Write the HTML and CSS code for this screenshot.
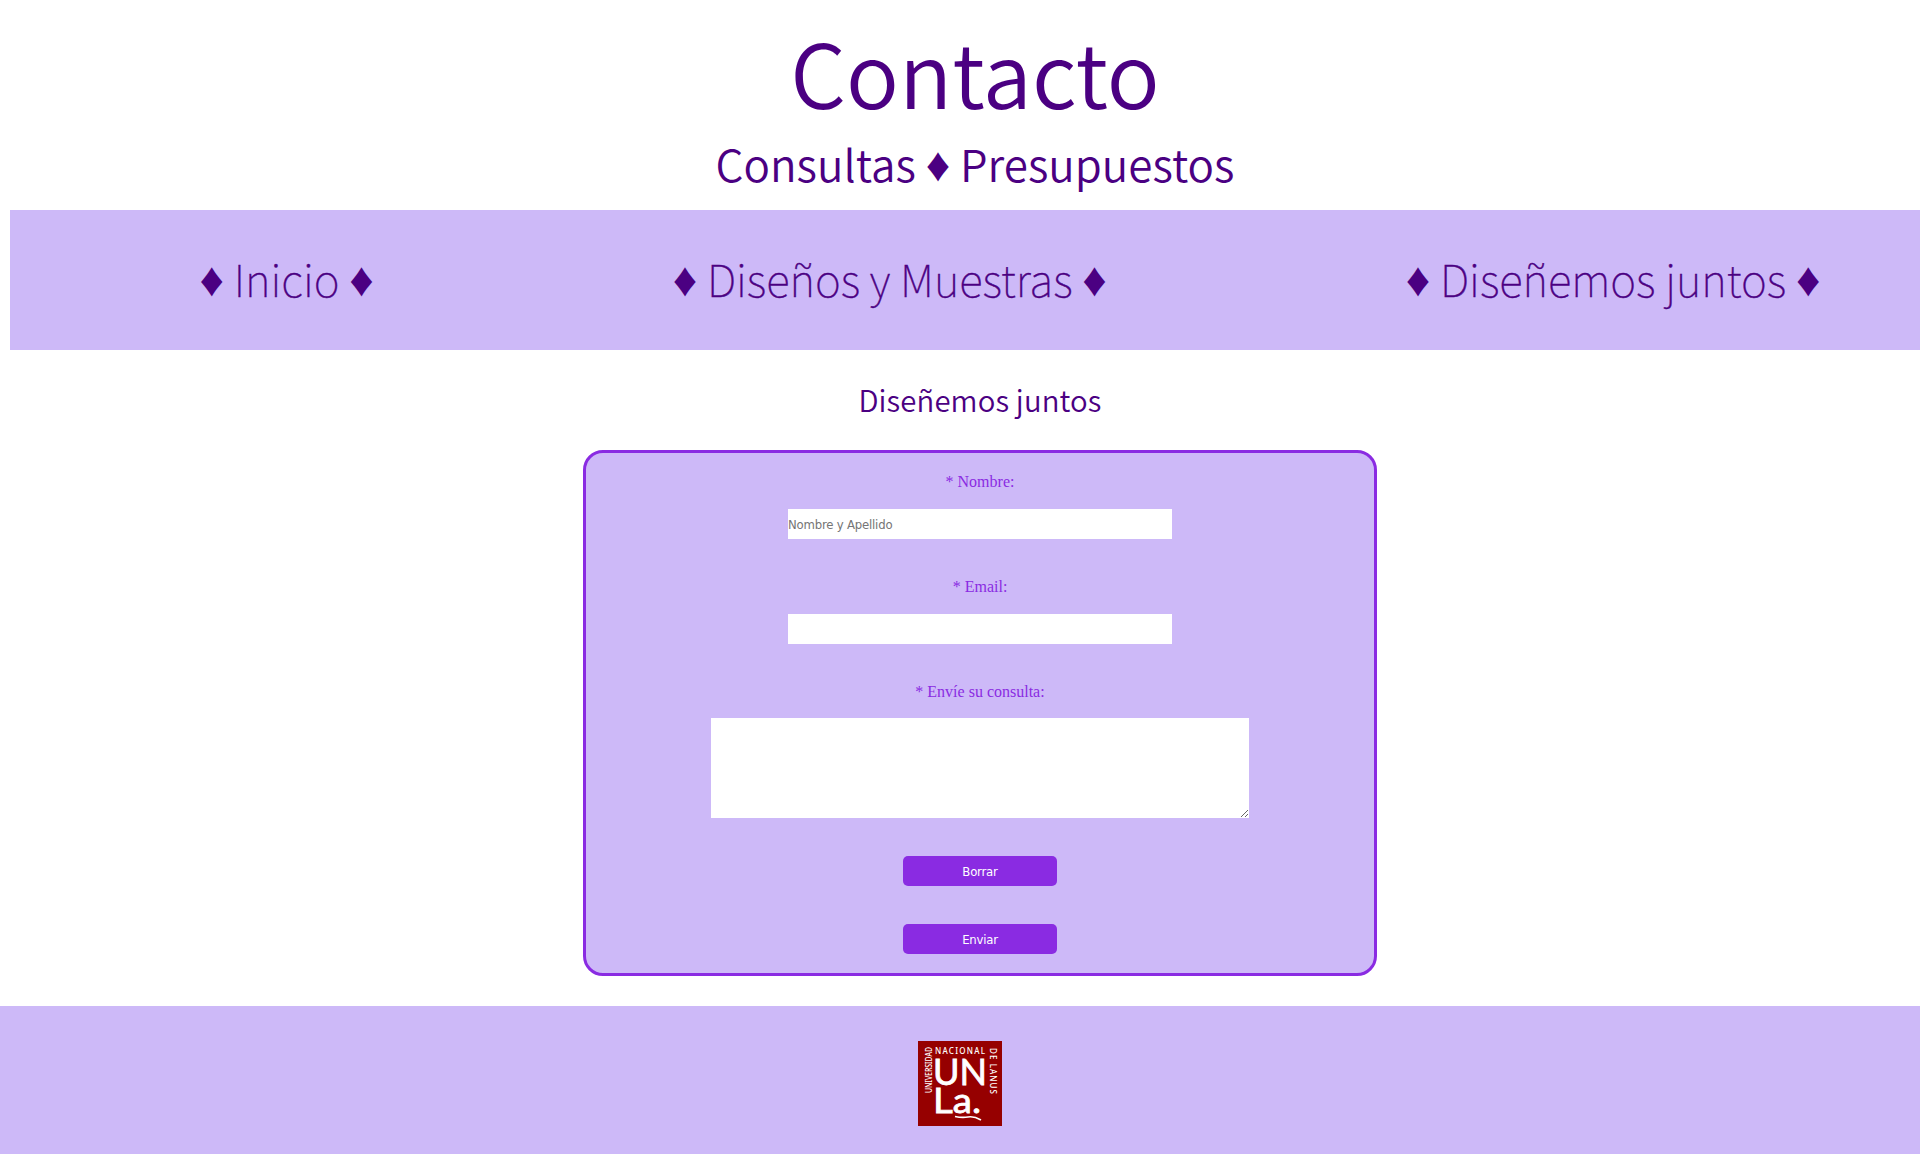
FILE: index.html
```html
<!DOCTYPE html>
<html lang="es">
<head>
<meta charset="utf-8">
<title>Contacto</title>
<link rel="stylesheet" href="styles.css">
</head>
<body>
<header class="header">
  <h1 class="title">Contacto</h1>
  <h2 class="subtitle">Consultas <span class="diamond">♦</span> Presupuestos</h2>
</header>
<nav class="nav">
  <a class="nav-link"><span class="diamond">♦</span> Inicio <span class="diamond">♦</span></a>
  <a class="nav-link"><span class="diamond">♦</span> Diseños y Muestras <span class="diamond">♦</span></a>
  <a class="nav-link"><span class="diamond">♦</span> Diseñemos juntos <span class="diamond">♦</span></a>
</nav>
<main class="main">
  <h3 class="section-title">Diseñemos juntos</h3>
  <form class="form">
    <label class="label" for="nombre">* Nombre:</label>
    <input class="input" id="nombre" type="text" placeholder="Nombre y Apellido">
    <label class="label" for="email">* Email:</label>
    <input class="input" id="email" type="email">
    <label class="label label-message" for="consulta">* Envíe su consulta:</label>
    <textarea class="textarea" id="consulta"></textarea>
    <button class="button" type="reset">Borrar</button>
    <button class="button" type="submit">Enviar</button>
  </form>
</main>
<footer class="footer">
  <svg class="logo" viewBox="0 0 84 85" role="img" aria-label="Universidad Nacional de Lanús">
    <rect width="84" height="85" fill="#960000"/>
    <g fill="#fff">
      <text class="logo-small" x="17" y="13" textLength="50">NACIONAL</text>
      <text class="logo-small" transform="translate(13.5 52) rotate(-90)" textLength="46" lengthAdjust="spacingAndGlyphs">UNIVERSIDAD</text>
      <text class="logo-small" transform="translate(71.5 7) rotate(90)" textLength="46">DE LANUS</text>
      <text class="logo-big" x="15" y="43.500" textLength="54" lengthAdjust="spacingAndGlyphs">UN</text>
      <text class="logo-big logo-la" x="15" y="72" textLength="48" lengthAdjust="spacingAndGlyphs">La.</text>
    </g>
    <path d="M37 75.500Q44 77 50 76T63 79" fill="none" stroke="#fff" stroke-width="1.600"/>
  </svg>
</footer>
</body>
</html>
```
FILE: styles.css
```css
* { box-sizing: border-box; }
body {
  margin: 0;
  width: 1920px;
  height: 1154px;
  overflow: hidden;
  color: #4b0082;
  font-family: "Noto Sans CJK SC", "Noto Sans", sans-serif;
}
.header {
  width: 1930px;
  height: 210px;
  margin-left: 10px;
  padding-top: 16px;
  text-align: center;
}
.title {
  margin: 0;
  font-size: 88px;
  font-weight: 350;
  line-height: 110px;
}
.subtitle {
  margin: 0;
  padding-top: 3px;
  font-size: 44px;
  font-weight: 350;
  line-height: 68px;
}
.diamond {
  font-family: "Liberation Sans", sans-serif;
  font-size: 48px;
  font-weight: 400;
  line-height: 0;
  vertical-align: 1px;
}
.nav {
  display: flex;
  justify-content: space-around;
  align-items: center;
  width: 1960px;
  height: 140px;
  margin-left: 10px;
  padding: 0 0 4px 40px;
  background: #cdb9f8;
}
.nav-link {
  font-size: 44px;
  font-weight: 100;
  -webkit-text-stroke: 0.4px #4b0082;
}
.nav-link .diamond { -webkit-text-stroke: 0; }
.main {
  display: flex;
  flex-direction: column;
  align-items: center;
  width: 1940px;
  height: 656px;
  margin-left: 10px;
}
.section-title {
  margin: 0;
  padding-bottom: 2px;
  font-size: 29.33px;
  font-weight: 350;
  line-height: 98px;
  letter-spacing: 0.12px;
}
.form {
  display: flex;
  flex-direction: column;
  align-items: center;
  width: 794px;
  height: 526px;
  padding: 19px 10px;
  border: 3px solid #8a2be2;
  border-radius: 20px;
  background: #cdb9f8;
}
.label {
  margin-bottom: 17px;
  color: #8a2be2;
  font: 16px/20px "Liberation Serif", serif;
}
.label-message { margin-bottom: 16px; }
.input, .textarea, .button {
  flex: none;
  border: 0;
  padding: 0;
  margin: 0 0 38px;
  font: 13px "DejaVu Sans Condensed", "Noto Sans", sans-serif;
  letter-spacing: -0.2px;
}
.input { width: 50%; height: 30px; background: #fff; }
.textarea { width: 70%; height: 100px; background: #fff; }
.button {
  width: 20%;
  height: 30px;
  border-radius: 5px;
  background: #8a2be2;
  color: #fff;
}
.footer {
  display: flex;
  justify-content: center;
  height: 148px;
  padding-top: 35px;
  background: #cdb9f8;
}
.logo { width: 84px; height: 85px; }
.logo-small { font: 500 8px "Noto Sans", sans-serif; }
.logo-big { font: 36px "Lato", sans-serif; stroke: #fff; stroke-width: 0.8px; }
.logo-la { font-size: 35px; }
```
